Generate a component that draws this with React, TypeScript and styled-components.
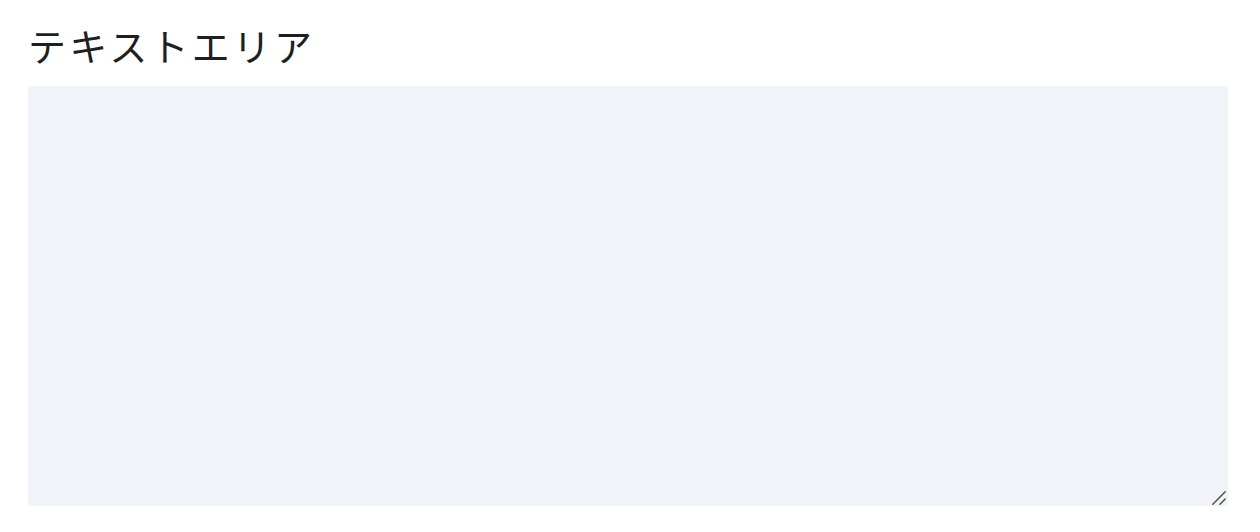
import React from "react";
import styled, { createGlobalStyle } from "styled-components";

const Global = createGlobalStyle`
  html, body { margin: 0; padding: 0; background: #ffffff; }
  body { font-family: "Noto Sans CJK JP", "Noto Sans", sans-serif; }
`;

const Page = styled.div`
  display: flex;
  flex-direction: column;
  gap: 14px;
  padding: 18px 32px 0 28px;
`;

const Title = styled.h1`
  margin: 0;
  font-size: 38px;
  font-weight: 400;
  line-height: 54px;
  letter-spacing: 3.2px;
  color: #1f1f1f;
`;

const AreaWrap = styled.div`
  position: relative;
  width: 1200px;
  height: 420px;
`;

const Area = styled.textarea`
  display: block;
  box-sizing: border-box;
  width: 100%;
  height: 100%;
  border: none;
  border-radius: 3px;
  background: #f0f4f8;
  outline: none;
  resize: none;
  padding: 12px;
  font-size: 16px;
  font-family: inherit;
`;

const Grip = styled.svg`
  position: absolute;
  right: 2px;
  bottom: 1px;
  width: 14px;
  height: 14px;
  pointer-events: none;
`;

export default function App() {
  return (
    <>
      <Global />
      <Page>
        <Title>テキストエリア</Title>
        <AreaWrap>
          <Area />
          <Grip viewBox="0 0 14 14">
            <path d="M0.8 13.2 L13.2 0.8 M8 13.2 L13.2 8" stroke="#4a4a4a" strokeWidth="1.4" strokeLinecap="round" fill="none" />
          </Grip>
        </AreaWrap>
      </Page>
    </>
  );
}
